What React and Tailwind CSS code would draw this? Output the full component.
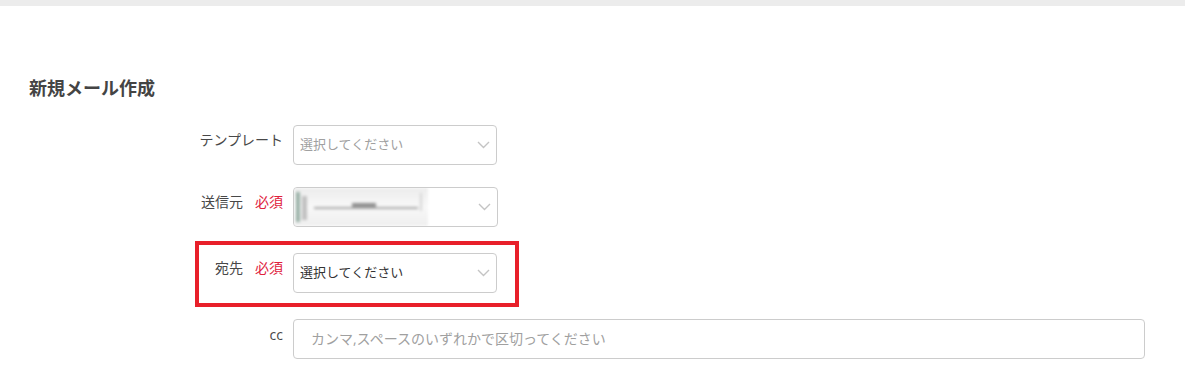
import React from 'react';

const font = { fontFamily: '"Open Sans", "Noto Sans CJK JP", sans-serif' };

function Chevron() {
  return (
    <svg width="13" height="8" viewBox="0 0 13 8" className="shrink-0">
      <path d="M1 1l5.5 5.5L12 1" fill="none" stroke="#c4c4c4" strokeWidth="1.4" />
    </svg>
  );
}

function Select({ children, muted }) {
  return (
    <div className="w-[204px] h-[40px] border border-[#cccccc] rounded-[4px] flex items-center justify-between pl-[6px] pr-[6px] bg-white">
      <span className={`text-[13px] ${muted ? 'text-[#a0a0a0]' : 'text-[#333333]'}`}>{children}</span>
      <Chevron />
    </div>
  );
}

function Required() {
  return <span className="text-[#e0203c] ml-[12px]">必須</span>;
}

export default function App() {
  return (
    <div className="w-full min-h-[373px] bg-white text-[#484848]" style={font}>
      <div className="h-[6px] bg-[#ececec]" />

      <h2 className="mt-[70px] pl-[29px] text-[18px] leading-[24px] font-bold text-[#444444]">新規メール作成</h2>

      <div className="mt-[25px] flex flex-col">
        {/* テンプレート */}
        <div className="flex gap-[10px]">
          <div className="w-[283px] text-right text-sm leading-[20px] pt-[5px]">テンプレート</div>
          <Select muted>選択してください</Select>
        </div>

        {/* 送信元 */}
        <div className="flex gap-[10px] mt-[22px]">
          <div className="w-[283px] text-right text-sm leading-[20px] pt-[5px]">
            送信元<Required />
          </div>
          <div className="w-[205px] h-[40px] border border-[#cccccc] rounded-[4px] flex items-center justify-between pr-[6px] bg-white overflow-hidden">
            <div className="relative w-[134px] h-full bg-gradient-to-b from-[#ececec] via-[#f8f8f8] to-[#eeeeee] blur-[1.5px]">
              <div className="absolute left-[2px] top-[4px] w-[4px] h-[30px] bg-[#98b0a6]" />
              <div className="absolute left-[8px] top-[8px] w-[5px] h-[24px] bg-[#c0c0c0]" />
              <div className="absolute left-[20px] top-[19px] w-[104px] h-[2px] bg-[#a8a8a8]" />
              <div className="absolute left-[58px] top-[15px] w-[24px] h-[4px] bg-[#909090]" />
              <div className="absolute left-[126px] top-[5px] w-[2px] h-[18px] bg-[#d4d4d4]" />
            </div>
            <Chevron />
          </div>
        </div>

        {/* 宛先 */}
        <div className="mt-[14px] ml-[195px] w-[324px] border-4 border-[#e8202a] pt-[8px] pb-[10px] pr-[18px] flex gap-[10px]">
          <div className="w-[84px] text-right text-sm leading-[20px] pt-[5px]">
            宛先<Required />
          </div>
          <Select>選択してください</Select>
        </div>

        {/* cc */}
        <div className="flex gap-[10px] mt-[12px]">
          <div className="w-[283px] text-right text-sm leading-[20px] pt-[6px]">cc</div>
          <div className="w-[852px] h-[40px] border border-[#cccccc] rounded-[4px] flex items-center pl-[17px] bg-white">
            <span className="text-sm text-[#a0a0a0]">カンマ,スペースのいずれかで区切ってください</span>
          </div>
        </div>
      </div>
    </div>
  );
}
